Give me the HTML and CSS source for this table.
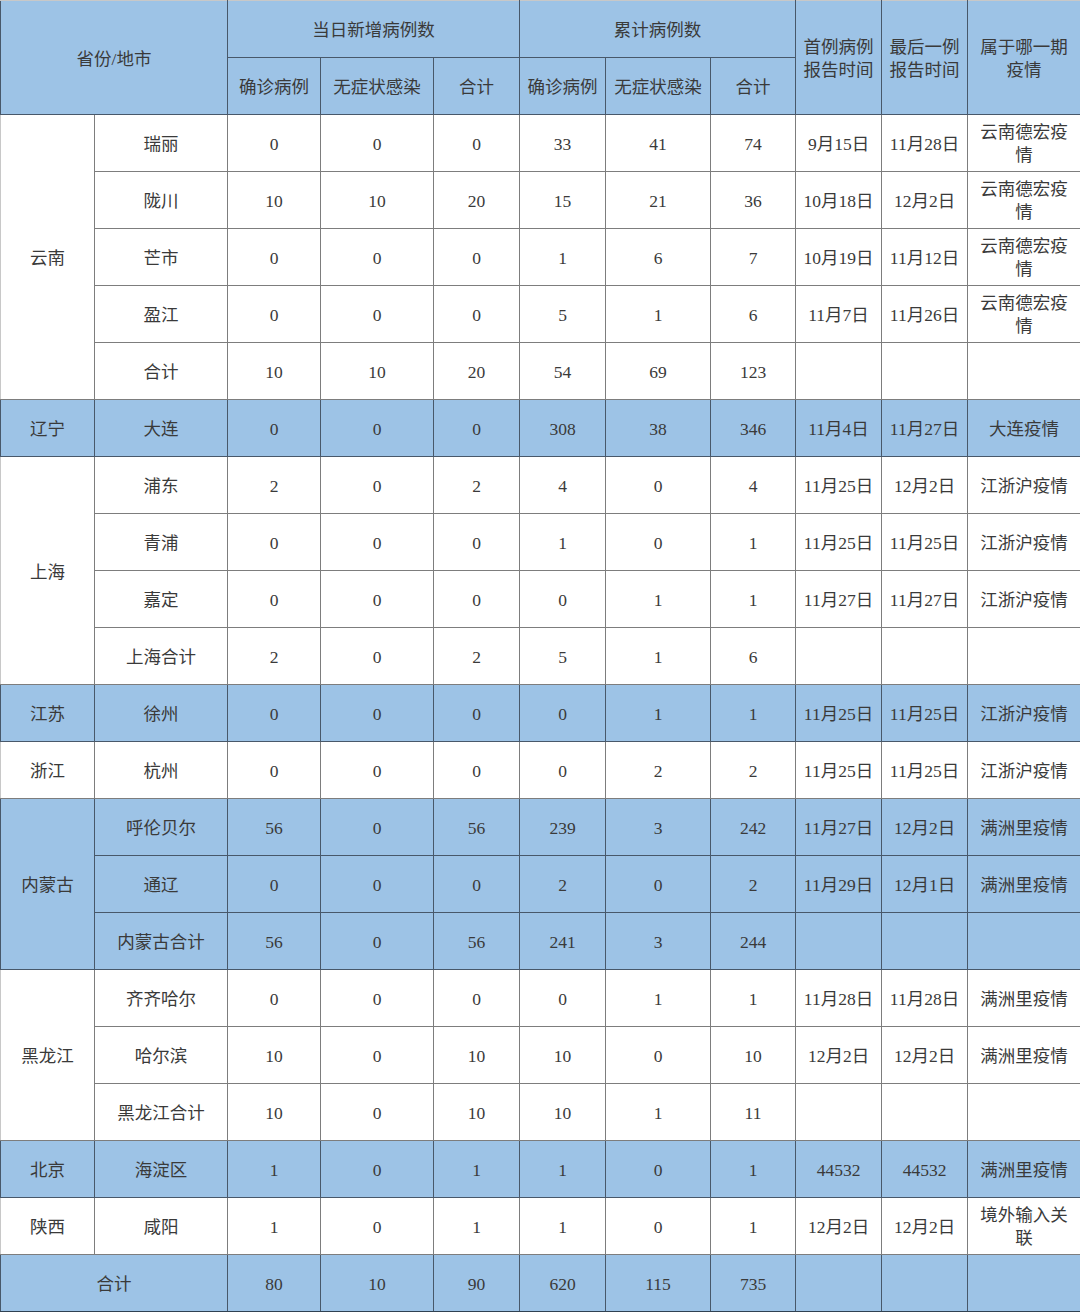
FILE: index.html
```html
<!DOCTYPE html>
<html lang="zh">
<head>
<meta charset="utf-8">
<link rel="stylesheet" href="styles.css">
</head>
<body>
<table class="t">
<colgroup>
<col style="width:94px"><col style="width:133px"><col style="width:93px"><col style="width:113px"><col style="width:86px"><col style="width:86px"><col style="width:105px"><col style="width:85px"><col style="width:86px"><col style="width:86px"><col style="width:113px">
</colgroup>
<tr class="b top">
<td colspan="2" rowspan="2" class="c0">省份/地市</td>
<td colspan="3" class="k">当日新增病例数</td>
<td colspan="3">累计病例数</td>
<td rowspan="2" class="two">首例病例<br>报告时间</td>
<td rowspan="2" class="two">最后一例<br>报告时间</td>
<td rowspan="2" class="two">属于哪一期<br>疫情</td>
</tr>
<tr class="b">
<td class="k">确诊病例</td><td>无症状感染</td><td>合计</td><td>确诊病例</td><td>无症状感染</td><td>合计</td>
</tr>
<tr><td rowspan="5" class="c0">云南</td><td>瑞丽</td><td class="k">0</td><td>0</td><td>0</td><td>33</td><td>41</td><td>74</td><td>9月15日</td><td>11月28日</td><td class="two">云南德宏疫<br>情</td></tr>
<tr><td>陇川</td><td class="k">10</td><td>10</td><td>20</td><td>15</td><td>21</td><td>36</td><td>10月18日</td><td>12月2日</td><td class="two">云南德宏疫<br>情</td></tr>
<tr><td>芒市</td><td class="k">0</td><td>0</td><td>0</td><td>1</td><td>6</td><td>7</td><td>10月19日</td><td>11月12日</td><td class="two">云南德宏疫<br>情</td></tr>
<tr><td>盈江</td><td class="k">0</td><td>0</td><td>0</td><td>5</td><td>1</td><td>6</td><td>11月7日</td><td>11月26日</td><td class="two">云南德宏疫<br>情</td></tr>
<tr><td>合计</td><td class="k">10</td><td>10</td><td>20</td><td>54</td><td>69</td><td>123</td><td></td><td></td><td></td></tr>
<tr class="b"><td class="c0">辽宁</td><td>大连</td><td class="k">0</td><td>0</td><td>0</td><td>308</td><td>38</td><td>346</td><td>11月4日</td><td>11月27日</td><td>大连疫情</td></tr>
<tr><td rowspan="4" class="c0">上海</td><td>浦东</td><td class="k">2</td><td>0</td><td>2</td><td>4</td><td>0</td><td>4</td><td>11月25日</td><td>12月2日</td><td>江浙沪疫情</td></tr>
<tr><td>青浦</td><td class="k">0</td><td>0</td><td>0</td><td>1</td><td>0</td><td>1</td><td>11月25日</td><td>11月25日</td><td>江浙沪疫情</td></tr>
<tr><td>嘉定</td><td class="k">0</td><td>0</td><td>0</td><td>0</td><td>1</td><td>1</td><td>11月27日</td><td>11月27日</td><td>江浙沪疫情</td></tr>
<tr><td>上海合计</td><td class="k">2</td><td>0</td><td>2</td><td>5</td><td>1</td><td>6</td><td></td><td></td><td></td></tr>
<tr class="b"><td class="c0">江苏</td><td>徐州</td><td class="k">0</td><td>0</td><td>0</td><td>0</td><td>1</td><td>1</td><td>11月25日</td><td>11月25日</td><td>江浙沪疫情</td></tr>
<tr><td class="c0">浙江</td><td>杭州</td><td class="k">0</td><td>0</td><td>0</td><td>0</td><td>2</td><td>2</td><td>11月25日</td><td>11月25日</td><td>江浙沪疫情</td></tr>
<tr class="b"><td rowspan="3" class="c0">内蒙古</td><td>呼伦贝尔</td><td class="k">56</td><td>0</td><td>56</td><td>239</td><td>3</td><td>242</td><td>11月27日</td><td>12月2日</td><td>满洲里疫情</td></tr>
<tr class="b"><td>通辽</td><td class="k">0</td><td>0</td><td>0</td><td>2</td><td>0</td><td>2</td><td>11月29日</td><td>12月1日</td><td>满洲里疫情</td></tr>
<tr class="b"><td>内蒙古合计</td><td class="k">56</td><td>0</td><td>56</td><td>241</td><td>3</td><td>244</td><td></td><td></td><td></td></tr>
<tr><td rowspan="3" class="c0">黑龙江</td><td>齐齐哈尔</td><td class="k">0</td><td>0</td><td>0</td><td>0</td><td>1</td><td>1</td><td>11月28日</td><td>11月28日</td><td>满洲里疫情</td></tr>
<tr><td>哈尔滨</td><td class="k">10</td><td>0</td><td>10</td><td>10</td><td>0</td><td>10</td><td>12月2日</td><td>12月2日</td><td>满洲里疫情</td></tr>
<tr><td>黑龙江合计</td><td class="k">10</td><td>0</td><td>10</td><td>10</td><td>1</td><td>11</td><td></td><td></td><td></td></tr>
<tr class="b"><td class="c0">北京</td><td>海淀区</td><td class="k">1</td><td>0</td><td>1</td><td>1</td><td>0</td><td>1</td><td>44532</td><td>44532</td><td>满洲里疫情</td></tr>
<tr><td class="c0">陕西</td><td>咸阳</td><td class="k">1</td><td>0</td><td>1</td><td>1</td><td>0</td><td>1</td><td>12月2日</td><td>12月2日</td><td class="two">境外输入关<br>联</td></tr>
<tr class="b last"><td colspan="2" class="c0">合计</td><td class="k">80</td><td>10</td><td>90</td><td>620</td><td>115</td><td>735</td><td></td><td></td><td></td></tr>
</table>
</body>
</html>
```

FILE: styles.css
```css
html, body {
  margin: 0;
  padding: 0;
  background: #ffffff;
}
.t {
  width: 1080px;
  table-layout: fixed;
  border-collapse: collapse;
  font-family: "Liberation Serif", "Noto Sans CJK SC", serif;
  font-size: 17.5px;
  color: #3a3a3a;
}
.t tr {
  height: 57px;
}
.t td {
  border: 1px solid #7d7d7d;
  padding: 2px 0 0 0;
  text-align: center;
  vertical-align: middle;
  line-height: 22px;
  white-space: nowrap;
  overflow: hidden;
}
.t td.two {
  line-height: 23px;
}
.t tr.b td {
  background: #9dc3e6;
  border-color: #48586a;
}
.t tr.top td {
  border-top-color: #c8c8c8;
}
.t td.c0 {
  border-left-color: #c8c8c8;
}
.t td.k {
  border-left: 1px solid #111111;
}
.t tr.last td {
  border-bottom: 2px solid #2f4152;
}
.t td:last-child {
  border-right-color: #3a4a5a;
}
```
